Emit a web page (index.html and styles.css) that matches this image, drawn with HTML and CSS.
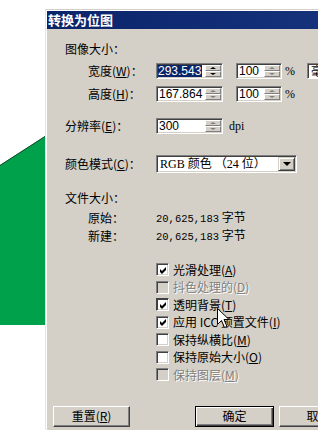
FILE: index.html
```html
<!DOCTYPE html>
<html lang="zh-CN">
<head>
<meta charset="utf-8">
<title>转换为位图</title>
<link rel="stylesheet" href="styles.css">
</head>
<body>
<div class="screen">
  <div class="canvas">
    <svg width="45" height="430" viewBox="0 0 45 430">
      <polygon points="0,165 45,136 45,325 0,325" fill="#00a14b"/>
      <line x1="0" y1="165.5" x2="45" y2="136.5" stroke="#1f4a30" stroke-width="1"/>
    </svg>
  </div>
  <div class="dialog">
    <div class="titlebar">转换为位图</div>
    <div class="body">
      <div class="row sect">图像大小：</div>
      <div class="row r-w">
        <span class="lbl sub">宽度(<u>W</u>)：</span>
        <span class="spin w67"><span class="field"><span class="sel">293.543</span></span><span class="arrows dark"><i class="up"></i><i class="dn"></i></span></span>
        <span class="spin w46 gap13"><span class="field">100</span><span class="arrows"><i class="up"></i><i class="dn"></i></span></span>
        <span class="pct">%</span>
        <span class="unit">毫米</span>
      </div>
      <div class="row r-h">
        <span class="lbl sub">高度(<u>H</u>)：</span>
        <span class="spin w67"><span class="field">167.864</span><span class="arrows"><i class="up"></i><i class="dn"></i></span></span>
        <span class="spin w46 gap13"><span class="field">100</span><span class="arrows"><i class="up"></i><i class="dn"></i></span></span>
        <span class="pct">%</span>
      </div>
      <div class="row r-res">
        <span class="lbl">分辨率(<u>E</u>)：</span>
        <span class="spin w67"><span class="field">300</span><span class="arrows"><i class="up"></i><i class="dn"></i></span></span>
        <span class="dpi">dpi</span>
      </div>
      <div class="row r-mode">
        <span class="lbl">颜色模式(<u>C</u>)：</span>
        <span class="combo"><span class="ctext">RGB 颜色 （24 位）</span><span class="cbtn"><b></b></span></span>
      </div>
      <div class="row r-size">文件大小：</div>
      <div class="row r-orig">
        <span class="lbl sub">原始：</span>
        <span class="val"><span class="num">20,625,183</span> 字节</span>
      </div>
      <div class="row r-new">
        <span class="lbl sub">新建：</span>
        <span class="val"><span class="num">20,625,183</span> 字节</span>
      </div>
      <div class="checks">
        <div class="chk"><span class="box"><svg width="7" height="7" viewBox="0 0 7 7"><path d="M0 2 L2 4 L6 0 L6 3 L2 7 L0 5 Z"/></svg></span><span>光滑处理(<u>A</u>)</span></div>
        <div class="chk dis"><span class="box off"></span><span>抖色处理的(<u>D</u>)</span></div>
        <div class="chk"><span class="box focus"><svg width="7" height="7" viewBox="0 0 7 7"><path d="M0 2 L2 4 L6 0 L6 3 L2 7 L0 5 Z"/></svg></span><span>透明背景(<u>T</u>)</span></div>
        <div class="chk"><span class="box"><svg width="7" height="7" viewBox="0 0 7 7"><path d="M0 2 L2 4 L6 0 L6 3 L2 7 L0 5 Z"/></svg></span><span>应用 ICC 预置文件(<u>I</u>)</span></div>
        <div class="chk"><span class="box"></span><span>保持纵横比(<u>M</u>)</span></div>
        <div class="chk"><span class="box"></span><span>保持原始大小(<u>O</u>)</span></div>
        <div class="chk dis"><span class="box off"></span><span>保持图层(<u>M</u>)</span></div>
      </div>
    </div>
    <div class="footer">
      <span class="btn">重置(<u>R</u>)</span>
      <span class="btn def">确定</span>
      <span class="btn cancel">取消</span>
    </div>
  </div>
  <svg class="cursor" width="13" height="21" viewBox="0 0 13 21">
    <path d="M0.5 0.5 L0.5 16.5 L4.5 12.5 L7.5 19.5 L10 18.5 L7 11.5 L12 11.5 Z" fill="#fff" stroke="#000" stroke-width="1" stroke-linejoin="miter"/>
  </svg>
</div>
</body>
</html>
```
FILE: styles.css
```css
* { box-sizing: border-box; margin: 0; padding: 0; }
html, body { width: 318px; height: 430px; overflow: hidden; background: #fff; }
body {
  font-family: "Noto Sans CJK SC", "Liberation Sans", sans-serif;
  font-size: 12px;
  line-height: 14px;
  color: #000;
}
u { text-decoration: underline; }

.screen { position: relative; display: flex; width: 318px; height: 430px; overflow: hidden; }
.canvas { flex: none; width: 45px; height: 430px; }
.canvas svg { display: block; }

.dialog {
  flex: none;
  width: 300px;
  height: 421px;
  margin-top: 9px;
  background: #d4d0c8;
  border-top: 1px solid #d4d0c8;
  border-left: 1px solid #e6e4de;
  padding: 1px 0 0 1px;
  box-shadow: inset 1px 1px 0 #fff;
}

.titlebar {
  height: 18px;
  background: linear-gradient(to right, #0a246a 0%, #16337c 100%);
  color: #fff;
  font-weight: bold;
  font-size: 13px;
  line-height: 18px;
  padding-left: 1px;
}

.body { padding-left: 18px; }
.row { display: flex; align-items: center; height: 16px; white-space: nowrap; }
.sect { margin-top: 12px; }
.r-w { margin-top: 6px; }
.r-h { margin-top: 7px; }
.r-res { margin-top: 16px; }
.r-mode { margin-top: 21px; height: 18px; }
.r-size { margin-top: 18px; height: 14px; }
.r-orig { margin-top: 6px; height: 14px; }
.r-new { margin-top: 4px; height: 14px; }

.lbl { flex: none; width: 91px; white-space: nowrap; }
.lbl.sub { padding-left: 23px; }

.spin {
  flex: none;
  display: flex;
  height: 16px;
  background: #fff;
  border: 1px solid;
  border-color: #808080 #fff #fff #808080;
  box-shadow: inset 1px 1px 0 #404040, inset -1px -1px 0 #d4d0c8;
  padding: 1px 1px 1px 1px;
}
.w67 { width: 67px; }
.w46 { width: 46px; }
.gap13 { margin-left: 13px; }
.field {
  flex: 1;
  display: flex;
  align-items: center;
  font-family: "Liberation Sans", sans-serif;
  font-size: 12px;
  line-height: 12px;
  padding-left: 1px;
  overflow: hidden;
}
.sel { background: #0a246a; color: #fff; padding: 0 1px 0 0; margin-left: -1px; }
.arrows { flex: none; width: 16px; display: flex; flex-direction: column; }
.arrows i {
  flex: 1;
  display: flex;
  align-items: center;
  justify-content: center;
  background: #d4d0c8;
  border: 1px solid;
  border-color: #fff #808080 #808080 #fff;
}
.arrows i::after {
  content: "";
  width: 0;
  height: 0;
  border-left: 3px solid transparent;
  border-right: 3px solid transparent;
}
.arrows i.up::after { border-bottom: 2px solid #808080; }
.arrows i.dn::after { border-top: 2px solid #808080; }
.arrows.dark i.up::after { border-bottom-color: #000; }
.arrows.dark i.dn::after { border-top-color: #000; }

.pct { margin-left: 3px; font-family: "Liberation Serif", serif; font-size: 12px; }
.unit {
  flex: none;
  margin-left: 12px;
  width: 40px;
  height: 16px;
  background: #fff;
  border: 1px solid;
  border-color: #808080 #fff #fff #808080;
  box-shadow: inset 1px 1px 0 #404040;
  padding-left: 3px;
  line-height: 14px;
  overflow: hidden;
}
.dpi { margin-left: 6px; font-family: "Liberation Serif", serif; font-size: 12px; }

.combo {
  flex: none;
  display: flex;
  width: 141px;
  height: 18px;
  background: #fff;
  border: 1px solid;
  border-color: #808080 #fff #fff #808080;
  box-shadow: inset 1px 1px 0 #404040, inset -1px -1px 0 #d4d0c8;
  padding: 1px;
}
.ctext { flex: 1; padding-left: 2px; line-height: 14px; font-family: "Liberation Serif", "Noto Sans CJK SC", serif; }
.cbtn {
  flex: none;
  width: 17px;
  display: flex;
  align-items: center;
  justify-content: center;
  background: #d4d0c8;
  border: 1px solid;
  border-color: #d4d0c8 #404040 #404040 #d4d0c8;
  box-shadow: inset 1px 1px 0 #fff, inset -1px -1px 0 #808080;
}
.cbtn b {
  width: 0;
  height: 0;
  border-left: 4px solid transparent;
  border-right: 4px solid transparent;
  border-top: 4px solid #000;
}

.val { white-space: nowrap; }
.num { font-family: "Liberation Mono", monospace; font-size: 10.5px; }

.checks { margin-top: 18px; margin-left: 91px; }
.chk { display: flex; align-items: center; height: 17.5px; white-space: nowrap; }
.box {
  flex: none;
  display: flex;
  align-items: center;
  justify-content: center;
  width: 13px;
  height: 13px;
  margin-right: 4px;
  background: #fff;
  border: 1px solid;
  border-color: #808080 #fff #fff #808080;
  box-shadow: inset 1px 1px 0 #404040, inset -1px -1px 0 #d4d0c8;
}
.box.focus { border-color: #404040 #fff #fff #404040; }
.box.off { background: #d4d0c8; }
.box svg { display: block; margin: 1px 0 0 1px; }
.box svg path { fill: #000; }
.chk.dis span:last-child { color: #808080; text-shadow: 1px 1px 0 #fff; }

.footer { display: flex; margin-top: 22px; padding-left: 6px; }
.btn {
  flex: none;
  display: flex;
  align-items: center;
  justify-content: center;
  width: 77px;
  height: 21px;
  background: #d4d0c8;
  border: 1px solid;
  border-color: #fff #404040 #404040 #fff;
  box-shadow: inset -1px -1px 0 #808080;
  white-space: nowrap;
}
.btn.def {
  width: 79px;
  margin-left: 65px;
  border-color: #000;
  box-shadow: inset 1px 1px 0 #fff, inset -1px -1px 0 #404040, inset -2px -2px 0 #808080;
}
.btn.cancel { width: 79px; margin-left: 5px; }

.cursor { position: absolute; left: 217px; top: 308px; }
```
